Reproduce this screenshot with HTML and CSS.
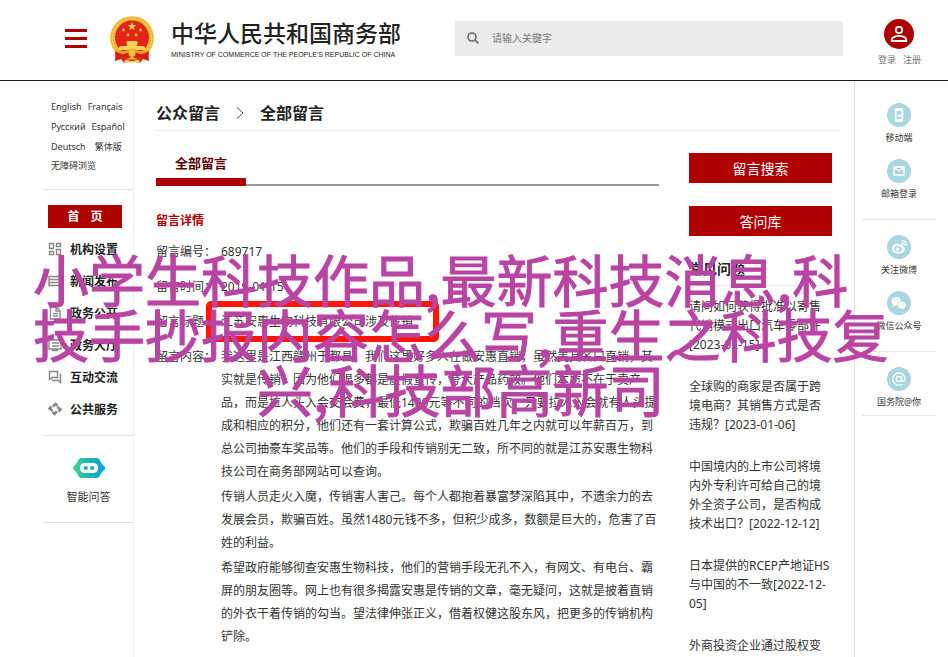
FILE: index.html
```html
<!DOCTYPE html>
<html lang="zh-CN">
<head>
<meta charset="utf-8">
<meta name="viewport" content="width=device-width, initial-scale=1">
<title>公众留言</title>
<link rel="stylesheet" href="styles.css">
</head>
<body>
<header class="header">
  <button class="menu" type="button" aria-label="菜单"><span></span><span></span><span></span></button>
  <a class="brand" href="#">
    <svg class="emblem" viewBox="0 0 44 48" aria-hidden="true">
      <path d="M6 33 5 45l6-2 3 4 8-2 8 2 3-4 6 2-1-12z" fill="#d81e12"/>
      <circle cx="22" cy="22" r="21.800" fill="#eeb62b"/>
      <circle cx="22" cy="22" r="19.500" fill="none" stroke="#f8d75c" stroke-width="1.500" stroke-dasharray="2 1.500"/>
      <circle cx="22" cy="21.500" r="17" fill="#e2231a"/>
      <path d="m22 6 1.100 3.100h3.300l-2.700 2 1 3.200-2.700-2-2.700 2 1-3.200-2.700-2h3.300z" fill="#fbd75a"/>
      <g fill="#f8c63f"><circle cx="13.500" cy="14" r="1.400"/><circle cx="30.500" cy="14" r="1.400"/><circle cx="18" cy="19" r="1.400"/><circle cx="26" cy="19" r="1.400"/></g>
      <path d="M17 25h10l1 3h-1v2h7l2 4H8l2-4h7v-2h-1z" fill="#fbd056"/>
      <path d="M6 34q8 2 12 0 4-2 8 0 4 2 12 0l-2 5q-6 2-9 0-5 4-10 0-4 2-9 0z" fill="#e8a424"/>
      <path d="M5 35q7 5 12 2l5-2 5 2q5 3 12-2l-1 8q-7-3-10 0l-6-2-6 2q-3-3-10 0z" fill="#d81e12"/>
      <circle cx="22" cy="37.500" r="3.500" fill="#f6c23e"/>
      <path d="M14 47q0-4 4-3l4 2 4-2q4-1 4 3l-4-1-4 1-4-1z" fill="#f8cf4c"/>
    </svg>
    <span class="brand-text">
      <span class="brand-cn">中华人民共和国商务部</span>
      <span class="brand-en">MINISTRY OF COMMERCE OF THE PEOPLE'S REPUBLIC OF CHINA</span>
    </span>
  </a>
  <form class="search">
    <svg viewBox="0 0 12 12" aria-hidden="true"><circle cx="5" cy="5" r="4" fill="none" stroke="#666" stroke-width="1.600"/><path d="m8 8 3.400 3.400" stroke="#666" stroke-width="1.700"/></svg>
    <input type="text" placeholder="请输入关键字" aria-label="请输入关键字">
  </form>
  <div class="account">
    <svg viewBox="0 0 30 30" aria-hidden="true"><circle cx="15" cy="15" r="15" fill="#ae0000"/><g fill="none" stroke="#fff" stroke-width="1.800"><circle cx="15" cy="11" r="3.200"/><path d="M7.800 22v-1.500c0-2.200 4-3.600 7.200-3.600s7.200 1.400 7.200 3.600V22z"/></g></svg>
    <div class="account-links"><a href="#">登录</a><a href="#">注册</a></div>
  </div>
</header>

<div class="page">
  <aside class="sidebar">
    <div class="langs">
      <div><a href="#">English</a><a href="#">Français</a></div>
      <div><a href="#">Русский</a><a href="#">Español</a></div>
      <div class="wide"><a href="#">Deutsch</a><a href="#">繁体版</a></div>
      <div><a href="#">无障碍浏览</a></div>
    </div>
    <nav class="nav">
      <a class="home" href="#"><span>首</span><span>页</span></a>
      <a class="nav-item" href="#"><svg viewBox="0 0 14 14"><path d="M1.500 1.500h4v5h-4zM8.500 1.500h4v3h-4zM1.500 9.500h4v3h-4zM8.500 7.500h4v5h-4z"/></svg>机构设置</a>
      <a class="nav-item" href="#"><svg viewBox="0 0 14 14"><path d="M1 2.500h12v9H1zM1 5.500h12M1 8.500h12"/></svg>新闻发布</a>
      <a class="nav-item" href="#"><svg viewBox="0 0 14 14"><path d="M2.500 1h6l3.500 3.500V13H2.500zM8 1v4h4M5 7.500h5M5 10h5"/></svg>政务公开</a>
      <a class="nav-item" href="#"><svg viewBox="0 0 14 14"><path d="M1 2h12v9H1zM4 12.500h6M4 5h7M4 8h7"/></svg>政务大厅</a>
      <a class="nav-item" href="#"><svg viewBox="0 0 14 14"><path d="M1.500 9.500v-8h8v6H4zM11.500 4.500h1v8l-2-2h-6v-1"/></svg>互动交流</a>
      <a class="nav-item" href="#"><svg viewBox="0 0 14 14"><path stroke-width="2.600" d="M5 4.500 7.500 2l2 2M9.500 5l3 2.500-2 2M9 9.500 6.500 12l-2-2M4.500 9l-3-2.500 2-2"/></svg>公共服务</a>
    </nav>
    <a class="robot" href="#">
      <svg viewBox="0 0 32 20" aria-hidden="true">
        <defs><linearGradient id="rg"><stop offset="0" stop-color="#45d690"/><stop offset=".6" stop-color="#12b0bc"/><stop offset="1" stop-color="#08a8d8"/></linearGradient></defs>
        <path d="M9 0h14q2 0 3 1l3 5 3 3v2l-3 3-3 5q-1 1-3 1H9q-2 0-3-1l-3-5-3-3V9l3-3 3-5q1-1 3-1z" fill="url(#rg)"/>
        <rect x="7" y="5" width="18" height="10" rx="4.500" fill="#fff"/>
        <circle cx="12.800" cy="10" r="2.100" fill="#18b3ad"/><circle cx="19.200" cy="10" r="2.100" fill="#0fadc4"/>
      </svg>
      智能问答
    </a>
  </aside>

  <main class="main">
    <h1 class="crumbs">公众留言
      <svg viewBox="0 0 8 12" aria-hidden="true"><path d="m1 .5 6 5.500-6 5.500" fill="none" stroke="#444"/></svg>
      全部留言</h1>
    <div class="columns">
      <section class="detail">
        <div class="tabs"><a class="tab" href="#">全部留言</a></div>
        <h2 class="detail-title">留言详情</h2>
        <dl class="fields">
          <dt>留言编号：</dt><dd>689717</dd>
          <dt>留言时间：</dt><dd>2019-01-15</dd>
          <dt>留言标题：</dt><dd><span class="marked">江苏安惠生物科技有限公司涉及传销</span></dd>
          <dt>留言内容：</dt>
          <dd class="content">
            <p>我这里是江西赣州于都县，我们这里好多人在做安惠直销，虽然美其名曰直销，其实就是传销，因为他们很多都是虚假宣传，夸大产品药效。他们本质不在于卖产品，而是拉人头入会交会费，最低1480元等不同的档次，只要拉人入会就有人头提成和相应的积分，他们还有一套计算公式，欺骗百姓几年之内就可以年薪百万，到总公司抽豪车奖品等。他们的手段和传销别无二致，所不同的就是江苏安惠生物科技公司在商务部网站可以查询。</p>
            <p>传销人员走火入魔，传销害人害己。每个人都抱着暴富梦深陷其中，不遗余力的去发展会员，欺骗百姓。虽然1480元钱不多，但积少成多，数额是巨大的，危害了百姓的利益。</p>
            <p>希望政府能够彻查安惠生物科技，他们的营销手段无孔不入，有网文、有电台、霸屏的朋友圈等。网上也有很多揭露安惠是传销的文章，毫无疑问，这就是披着直销的外衣干着传销的勾当。望法律伸张正义，借着权健这股东风，把更多的传销机构铲除。</p>
          </dd>
        </dl>
      </section>
      <section class="side">
        <button class="action" type="button">留言搜索</button>
        <button class="action" type="button">答问库</button>
        <h2 class="faq-title">常见问题</h2>
        <ul class="faq">
          <li><a href="#">请问如何获得批准以寄售代销模式出口汽车零部件[2023-02-15]</a></li>
          <li><a href="#">全球购的商家是否属于跨境电商？其销售方式是否违规？[2023-01-06]</a></li>
          <li><a href="#">中国境内的上市公司将境内外专利许可给自己的境外全资子公司，是否构成技术出口？[2022-12-12]</a></li>
          <li><a href="#">日本提供的RCEP产地证HS与中国的不一致[2022-12-05]</a></li>
          <li><a href="#">外商投资企业通过股权变</a></li>
        </ul>
      </section>
    </div>
  </main>

  <aside class="rail">
    <div class="rail-group">
      <a href="#"><svg viewBox="0 0 24 24"><circle cx="12" cy="12" r="12" fill="#a9d6df"/><rect x="8.700" y="6" width="6.600" height="12" rx="1" fill="none" stroke="#fff" stroke-width="1.800"/><path d="M9 7h6M9 17h6" stroke="#fff" stroke-width="2"/><path d="m10 14 1-2h1v-1.500l2.500 2-2.500 2V13z" fill="#fff"/></svg>移动端</a>
      <a href="#"><svg viewBox="0 0 24 24"><circle cx="12" cy="12" r="12" fill="#a9d6df"/><path d="M7 8h10v8H7zM7 8.500l5 3.500 5-3.500" fill="none" stroke="#fff" stroke-width="1.500" stroke-linejoin="round"/></svg>邮箱登录</a>
    </div>
    <div class="rail-group">
      <a href="#"><svg viewBox="0 0 24 24"><circle cx="12" cy="12" r="12" fill="#a9d6df"/><path d="M11 8.500c-2-1.500-6 2.500-6 5.500s3 4.500 6.500 4.500 6.500-2 6.500-4.500c0-1.500-1-2.200-2.200-2.500.5-2-1-2.500-3.800-1.500 0 0 .3-1-1-1.500z" fill="#fff"/><ellipse cx="11" cy="14" rx="4" ry="3" fill="#a9d6df"/><circle cx="10.500" cy="14.300" r="1.900" fill="#fff"/><path d="M14.500 8.200q2.500-.4 2.700 2.300M14.500 5.800q5-.5 5 4.700" fill="none" stroke="#fff" stroke-width="1.200"/></svg>关注微博</a>
      <a href="#"><svg viewBox="0 0 24 24"><circle cx="12" cy="12" r="12" fill="#a9d6df"/><path d="m5.500 16 .7-2.400A4.800 4.300 0 1 1 8.500 14.500z" fill="#fff"/><path d="m18 19-.4-1.800a4.500 3.900 0 1 0-2.200.8z" fill="#fff" stroke="#a9d6df" stroke-width=".8"/><g fill="#a9d6df"><circle cx="7.500" cy="9" r=".7"/><circle cx="10.700" cy="9" r=".7"/><circle cx="13.700" cy="13" r=".6"/><circle cx="16.500" cy="13" r=".6"/></g></svg>微信公众号</a>
    </div>
    <div class="rail-group">
      <a href="#"><svg viewBox="0 0 24 24"><circle cx="12" cy="12" r="12" fill="#a9d6df"/><g fill="none" stroke="#fff" stroke-width="1.300"><circle cx="11.800" cy="12" r="2.500"/><path d="M14.800 9v4.200c0 2 3.200 1.600 3.200-1.500 0-3.400-2.800-5.700-6-5.700s-6.300 2.600-6.300 6 2.700 6.200 6.300 6.200c1.500 0 2.700-.3 3.800-1"/></g></svg>国务院@你</a>
    </div>
  </aside>
</div>

<p class="overlay"><span>小学生科技作品,最新科技消息,科</span><span>技手抄报内容怎么写,重生之科技复</span><span class="last">兴,科技部高新司</span></p>
</body>
</html>
```
FILE: styles.css
```css
* { box-sizing: border-box; }
body {
  margin: 0;
  position: relative;
  background: #fff;
  color: #333;
  font-family: "Noto Sans", "Noto Sans CJK SC", sans-serif;
  font-size: 12px;
  overflow-x: hidden;
}
a { color: inherit; text-decoration: none; }
h1, h2, p, ul, dl, dd { margin: 0; padding: 0; }
svg { display: block; flex: none; }

.header {
  display: flex;
  align-items: center;
  height: 81px;
  padding: 0 27px 4px 65px;
  border-bottom: 1px solid #1c1c1c;
}
.menu {
  display: flex;
  flex-direction: column;
  gap: 5px;
  width: 22px;
  padding: 0;
  border: 0;
  background: none;
}
.menu span { height: 3px; background: #ae0000; }
.brand { display: flex; align-items: center; gap: 17px; margin: 3px 54px 0 23px; }
.emblem { width: 44px; height: 48px; }
.brand-text { display: flex; flex-direction: column; gap: 4px; width: 230px; white-space: nowrap; }
.brand-cn { font-size: 23px; line-height: 26px; font-weight: 500; color: #222; }
.brand-en { font-family: "Liberation Sans", Arial, sans-serif; font-size: 7px; line-height: 10px; color: #222; }
.search {
  flex: 1;
  display: flex;
  align-items: center;
  gap: 13px;
  height: 35px;
  padding-left: 12px;
  background: #ebebeb;
}
.search svg { width: 12px; height: 12px; }
.search input {
  flex: 1;
  min-width: 0;
  padding: 0;
  border: 0;
  background: none;
  font: inherit;
  font-size: 10px;
}
.search input::placeholder { color: #777; }
.account { display: flex; flex-direction: column; align-items: center; gap: 5px; margin: 9px 0 0 35px; }
.account svg { width: 30px; height: 30px; }
.account-links { display: flex; gap: 7px; font-size: 9px; line-height: 12px; color: #777; }

.page { display: grid; grid-template-columns: 134px 1fr 94px; }
.sidebar { padding: 16px 0 0 44px; border-right: 1px solid #f0f0f0; }
.langs { padding: 0 0 14px 7px; border-bottom: 1px solid #e6e6e6; font-size: 9px; line-height: 20px; white-space: nowrap; }
.langs div { display: flex; gap: 6px; }
.langs .wide { gap: 9px; }
.langs div:last-child { line-height: 18px; }
.nav { padding: 15px 11px 10px 4px; border-bottom: 1px solid #e6e6e6; font-weight: 700; color: #222; }
.home {
  display: flex;
  justify-content: center;
  gap: 11px;
  margin-bottom: 5px;
  background: #ae0000;
  color: #fff;
  line-height: 23px;
}
.nav-item { display: flex; align-items: center; gap: 8px; height: 32px; white-space: nowrap; }
.nav-item svg { width: 14px; height: 14px; fill: none; stroke: #888; stroke-width: 1.4; }
.robot {
  display: flex;
  flex-direction: column;
  align-items: center;
  gap: 11px;
  padding: 22px 0 17px;
  border-bottom: 1px solid #ddd;
  font-size: 11px;
  line-height: 16px;
}
.robot svg { width: 32px; height: 20px; }

.main { padding: 20px 15px 0 22px; }
.crumbs {
  display: flex;
  align-items: center;
  gap: 16px;
  padding-bottom: 5px;
  border-bottom: 1px solid #ececec;
  font-size: 16px;
  line-height: 24px;
  color: #222;
}
.crumbs svg { width: 8px; height: 12px; }
.columns { display: grid; grid-template-columns: 1fr 143px; gap: 30px; padding: 22px 7px 0 0; }
.tabs { display: flex; height: 33px; border-bottom: 2px solid #999; }
.tab {
  width: 90px;
  height: 33px;
  border-bottom: 8px solid #ae0000;
  color: #5c0000;
  font-size: 13px;
  font-weight: 700;
  line-height: 20px;
  text-align: center;
}
.detail-title { margin: 23px 0 1px; font-size: 12px; line-height: 24px; color: #ae0000; }
.fields { display: grid; grid-template-columns: 65px 1fr; line-height: 35px; }
.marked { position: relative; }
.marked::after {
  content: "";
  position: absolute;
  inset: -12px -26px -12px -15px;
  border: 6px solid #ff1505;
  border-radius: 5px;
}
.content { padding-top: 6px; line-height: 23px; }
.content p + p { margin-top: 2px; }
.action {
  display: block;
  width: 100%;
  height: 30px;
  margin-bottom: 23px;
  padding: 0;
  border: 0;
  background: #ae0000;
  color: #fff;
  font: inherit;
  font-size: 14px;
}
.faq-title {
  padding-bottom: 6px;
  border-bottom: 1px solid #ececec;
  font-size: 14px;
  line-height: 20px;
  color: #222;
}
.faq { list-style: none; padding-top: 11px; line-height: 19px; }
.faq li { margin-bottom: 23px; }

.rail { padding: 0 12px 0 7px; border-left: 1px solid #e0e0e0; }
.rail-group {
  display: flex;
  flex-direction: column;
  align-items: center;
  gap: 13px;
  padding: 15px 0 18px;
  border-bottom: 1px solid #e6e6e6;
}
.rail-group:first-child { padding-top: 22px; }
.rail-group:last-child { padding-bottom: 6px; }
.rail-group a {
  display: flex;
  flex-direction: column;
  align-items: center;
  gap: 4px;
  font-size: 9px;
  line-height: 14px;
  white-space: nowrap;
}
.rail-group a + a { margin-top: 1px; }
.rail-group svg { width: 24px; height: 24px; }

.overlay {
  position: absolute;
  top: 250px;
  left: 33px;
  color: #b944a3;
  font-family: "Noto Sans CJK SC", sans-serif;
  font-size: 56px;
  -webkit-text-stroke: 1px #b944a3;
  line-height: 55px;
  white-space: nowrap;
  pointer-events: none;
}
.overlay span { display: block; }
.overlay .last { text-align: center; }
```
